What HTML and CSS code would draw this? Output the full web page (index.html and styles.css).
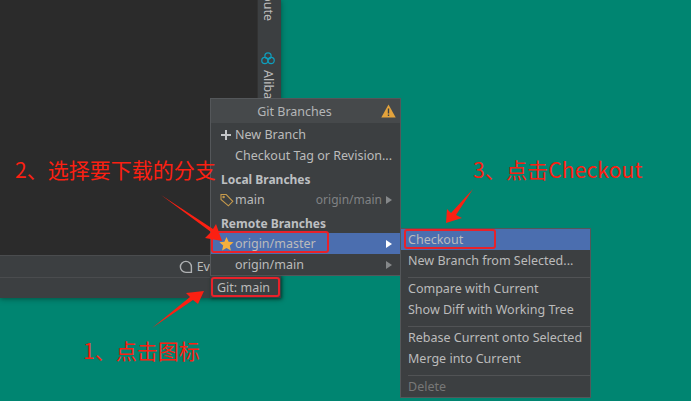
FILE: index.html
```html
<!DOCTYPE html>
<html lang="zh">
<head>
<meta charset="utf-8">
<title>Git Branches</title>
<link rel="stylesheet" href="styles.css">
</head>
<body>
<div class="desktop">
  <section class="ide">
    <div class="ide-main">
      <div class="editor"></div>
      <aside class="toolstrip">
        <div class="tool-top"><span class="vtext">bute</span></div>
        <svg class="ali-icon" width="14" height="13" viewBox="0 0 16 15" fill="none" stroke="#0e9fbd" stroke-width="1.4"><circle cx="8" cy="4.6" r="3.6"/><circle cx="4.4" cy="9.8" r="3.6"/><circle cx="11.6" cy="9.8" r="3.6"/></svg>
        <span class="vtext tool-ali">Alibaba</span>
      </aside>
    </div>
    <div class="bar bar-events">
      <svg class="ev-icon" width="14" height="14" viewBox="0 0 14 14" fill="none" stroke="#afb1b3" stroke-width="1.4"><path d="M12.4 12.4H7A5.5 5.5 0 1 1 12.4 7Z"/></svg>
      <span>Eve</span>
    </div>
    <div class="bar bar-status"></div>
  </section>

  <section class="popup branches">
    <header class="popup-title">
      <span class="title-text">Git Branches</span>
      <svg class="warn" width="15" height="14" viewBox="0 0 15 14"><path d="M7.5 .5 14.7 13.5H.3Z" fill="#e3a33c"/><path d="M6.8 4.5h1.4v5H6.8zM6.8 10.5h1.4v1.6H6.8z" fill="#3c3f41"/></svg>
    </header>
    <div class="row">
      <svg class="row-icon" width="12" height="12" viewBox="0 0 12 12"><path d="M5 1h2v4h4v2H7v4H5V7H1V5h4Z" fill="#c4c6c8"/></svg>
      <span>New Branch</span>
    </div>
    <div class="row"><span>Checkout Tag or Revision...</span></div>
    <div class="group-head first-head">Local Branches</div>
    <div class="row">
      <svg class="row-icon" width="14" height="14" viewBox="0 0 14 14" fill="none" stroke="#c69a4c" stroke-width="1.1"><path d="M1 1.5h5.2l6.6 6.8-4.4 4.5L1 6.5Z"/><circle cx="3.6" cy="4" r=".7"/></svg>
      <span>main</span>
      <span class="track">origin/main</span>
      <span class="caret dim"></span>
    </div>
    <div class="group-head">Remote Branches</div>
    <div class="row selected">
      <svg class="row-icon star" width="15" height="15" viewBox="0 0 15 15"><path d="M7.5 .6 9.6 5.3l5 .5-3.8 3.3 1.1 5-4.4-2.6-4.4 2.6 1.1-5L.4 5.8l5-.5Z" fill="#f4af3d"/></svg>
      <span>origin/master</span>
      <span class="track"></span>
      <span class="caret bright"></span>
    </div>
    <div class="row">
      <span>origin/main</span>
      <span class="track"></span>
      <span class="caret dim"></span>
    </div>
  </section>

  <section class="popup status-tip">Git: main</section>

  <section class="popup actions">
    <div class="action selected">Checkout</div>
    <div class="action">New Branch from Selected...</div>
    <hr class="sep">
    <div class="action">Compare with Current</div>
    <div class="action">Show Diff with Working Tree</div>
    <hr class="sep">
    <div class="action">Rebase Current onto Selected</div>
    <div class="action">Merge into Current</div>
    <hr class="sep">
    <div class="action disabled">Delete</div>
  </section>

  <div class="mark mark-status"></div>
  <div class="mark mark-branch"></div>
  <div class="mark mark-checkout"></div>

  <svg class="arrows" width="691" height="401" viewBox="0 0 691 401">
    <polygon points="152,328 190,297 186,293 204,291 198,304 193,300" fill="#fb2012"/>
    <polygon points="161,195 211,232 205,238 222,241 216,224 213,229" fill="#fb2012"/>
    <polygon points="473,189 451,213 447,209 446,223 462,218 456,215" fill="#fb2012"/>
  </svg>

  <p class="note note-1">1、点击图标</p>
  <p class="note note-2">2、选择要下载的分支</p>
  <p class="note note-3">3、点击Checkout</p>
</div>
</body>
</html>
```
FILE: styles.css
```css
* { box-sizing: border-box; }
html, body { margin: 0; padding: 0; }
body { background: #008571; overflow: hidden; }

.desktop {
  position: relative;
  width: 691px;
  height: 401px;
  overflow: hidden;
  background: #008571;
  font-family: "Noto Sans", "Open Sans", sans-serif;
  font-size: 12.5px;
  color: #bbbbbb;
}

/* IDE window */
.ide {
  position: absolute;
  left: 0;
  top: 0;
  width: 281px;
  height: 298px;
  display: flex;
  flex-direction: column;
  box-shadow: 0 1px 5px rgba(0, 40, 30, .55);
}
.ide-main { flex: 1; display: flex; min-height: 0; }
.editor { flex: 1; background: #2b2b2b; border-right: 1px solid #323232; }
.toolstrip {
  width: 23px;
  padding-right: 3px;
  background: #3c3f41;
  display: flex;
  flex-direction: column;
  align-items: center;
  overflow: hidden;
}
.tool-top {
  height: 21px;
  display: flex;
  flex-direction: column;
  justify-content: flex-end;
  overflow: hidden;
  margin-bottom: 31px;
}
.vtext { writing-mode: vertical-rl; line-height: 16px; color: #bbbbbb; }
.ali-icon { flex: none; margin-bottom: 5px; }
.tool-ali { white-space: nowrap; }

.bar { background: #3c3f41; border-top: 1px solid #4a4c4e; }
.bar-events {
  height: 22px;
  display: flex;
  align-items: center;
  justify-content: flex-end;
  gap: 4px;
  padding-right: 64px;
}
.bar-status { height: 21px; }

/* Popups */
.popup {
  position: absolute;
  background: #3c3f41;
  border: 1px solid #54575a;
}
.branches {
  left: 210px;
  top: 98px;
  width: 191px;
  height: 178px;
  display: flex;
  flex-direction: column;
}
.popup-title {
  height: 24px;
  flex: none;
  display: flex;
  align-items: center;
  padding-right: 4px;
  background: #46494b;
  color: #b4b6b8;
}
.title-text { flex: 1; text-align: center; }
.warn { flex: none; margin-left: 3px; }

.row {
  height: 21px;
  flex: none;
  display: flex;
  align-items: center;
  position: relative;
  padding-left: 24px;
  padding-right: 8px;
  white-space: nowrap;
}
.branches .row:nth-of-type(1) { margin-top: 1px; }
.row.selected { background: #4b6eaf; }
.row-icon { position: absolute; left: 9px; top: 50%; transform: translateY(-50%); }
.star { left: 8px; }
.track { margin-left: auto; margin-right: 4px; color: #808284; font-size: 12px; }
.caret {
  width: 0;
  height: 0;
  border-left: 6px solid #85888a;
  border-top: 4px solid transparent;
  border-bottom: 4px solid transparent;
}
.caret.bright { border-left-color: #ffffff; }
.group-head {
  height: 23px;
  flex: none;
  display: flex;
  align-items: flex-end;
  padding-left: 10px;
  line-height: 19px;
  font-weight: 700;
  font-size: 12px;
  color: #bdbfc1;
}
.first-head { height: 23px; }

.status-tip {
  left: 210px;
  top: 276px;
  width: 71px;
  height: 22px;
  border: 0;
  padding-left: 7px;
  display: flex;
  align-items: center;
  box-shadow: 1px 1px 3px rgba(0, 40, 30, .6);
}

.actions {
  left: 400px;
  top: 228px;
  width: 191px;
  height: 170px;
  display: flex;
  flex-direction: column;
}
.action {
  height: 21px;
  flex: none;
  display: flex;
  align-items: center;
  padding-left: 7px;
  white-space: nowrap;
}
.action.selected { background: #4b6eaf; }
.action.disabled { color: #777777; }
.sep {
  height: 1px;
  flex: none;
  margin: 6px 0 0 7px;
  border: 0;
  background: #515355;
}

/* Annotations */
.mark {
  position: absolute;
  border: 2px solid #e8222a;
  border-radius: 3px;
}
.mark-status { left: 211px; top: 277px; width: 69px; height: 20px; }
.mark-branch { left: 211px; top: 231px; width: 118px; height: 22px; }
.mark-checkout { left: 404px; top: 229px; width: 92px; height: 20px; }

.arrows { position: absolute; left: 0; top: 0; pointer-events: none; }

.note {
  position: absolute;
  margin: 0;
  font-family: "Noto Sans CJK SC", "Noto Sans", sans-serif;
  font-size: 21px;
  line-height: 28px;
  color: #fb2012;
  white-space: nowrap;
}
.note-1 { left: 83px; top: 336px; }
.note-2 { left: 15px; top: 155px; }
.note-3 { left: 473px; top: 155px; letter-spacing: .15px; }
```
